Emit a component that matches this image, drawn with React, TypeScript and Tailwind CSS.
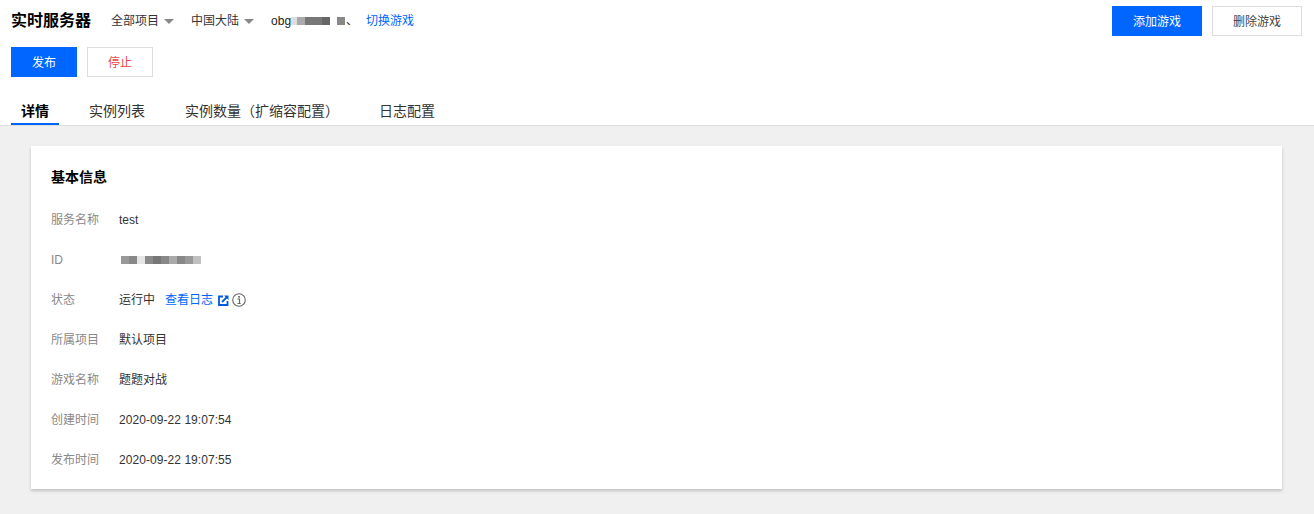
import React from 'react';

const font = { fontFamily: '"Liberation Sans", "Noto Sans CJK SC", sans-serif' };

const pixelsId = ['#999', '#888', '#e6e6e6', '#8a8a8a', '#777', '#888', '#aaa', '#888', '#999', '#c0c0c0'];

function Caret() {
  return <span className="w-0 h-0 border-x-[5px] border-x-transparent border-t-[5px] border-t-[#888] ml-[5px]" />;
}

function ExternalIcon() {
  return (
    <svg width="11" height="11" viewBox="0 0 11 11" fill="none" className="ml-[5px]">
      <path d="M5 1.500H1v8.500h8.500V6" stroke="#0058e0" strokeWidth="1.800" />
      <path d="M4 7l5-5" stroke="#0058e0" strokeWidth="1.800" />
      <path d="M6 0.500h4.500V5z" fill="#0058e0" />
    </svg>
  );
}

function InfoIcon() {
  return (
    <svg width="14" height="14" viewBox="0 0 14 14" fill="none" className="ml-[3px]">
      <circle cx="7" cy="7" r="6.300" stroke="#666" strokeWidth="1.100" />
      <rect x="6.200" y="3" width="1.700" height="1.700" fill="#666" />
      <path d="M5.500 6h2v4.500M5.500 10.500h3.200" stroke="#666" strokeWidth="1.200" />
    </svg>
  );
}

function Row({ label, children }: { label: string; children: React.ReactNode }) {
  return (
    <div className="flex items-center h-10 text-xs pt-[2px]">
      <span className="w-[68px] text-[#888]">{label}</span>
      <div className="flex items-center text-[#333]">{children}</div>
    </div>
  );
}

export default function App() {
  return (
    <div className="w-[1314px] h-[514px] overflow-hidden bg-[#f0f0f0] flex flex-col" style={font}>
      {/* Header */}
      <div className="bg-white h-[126px] border-b border-[#ddd] flex flex-col shrink-0">
        <div className="flex items-start justify-between pl-[11px] pr-[12px] pt-[6px]">
          <div className="flex items-center h-[30px]">
            <h1 className="text-base font-bold text-black w-[100px]">实时服务器</h1>
            <span className="text-xs text-[#333]">全部项目</span>
            <Caret />
            <span className="text-xs text-[#333] ml-[17px]">中国大陆</span>
            <Caret />
            <span className="text-xs text-[#222] ml-[17px]">obg</span>
            {/* blurred account id */}
            <div className="flex h-[8px] w-[55px]">
              <span className="w-[6px] bg-[#ddd]" />
              <span className="w-[8px] bg-[#aaa]" />
              <span className="w-[17px] bg-[#777]" />
              <span className="w-[8px] bg-[#666]" />
              <span className="w-[7px]" />
              <span className="w-[8px] bg-[#888]" />
            </div>
            <span className="text-xs text-[#333] w-[12px]">、</span>
            <a className="text-xs text-[#0066ff] ml-[8px]">切换游戏</a>
          </div>
          <div className="flex gap-[10px]">
            <button className="w-[90px] h-[30px] pt-[1px] bg-[#0066ff] text-white text-xs">添加游戏</button>
            <button className="w-[90px] h-[30px] pt-[1px] bg-white border border-[#ddd] text-[#444] text-xs">删除游戏</button>
          </div>
        </div>
        <div className="flex gap-[10px] pl-[11px] mt-[11px]">
          <button className="w-[66px] h-[30px] pt-[1px] bg-[#0066ff] text-white text-xs">发布</button>
          <button className="w-[66px] h-[30px] pt-[1px] bg-white border border-[#ddd] text-[#e54545] text-xs">停止</button>
        </div>
        <div className="flex pl-[11px] mt-auto h-[26px] text-sm leading-[24px] text-[#333]">
          <div className="w-[48px] text-center font-bold text-black border-b-2 border-[#0066ff]">详情</div>
          <div className="ml-[30px]">实例列表</div>
          <div className="ml-[40px]">实例数量（扩缩容配置）</div>
          <div className="ml-[40px]">日志配置</div>
        </div>
      </div>

      {/* Body */}
      <div className="pt-[20px] pl-[31px] pr-[32px]">
        <div className="bg-white h-[343px] px-[20px] pt-[20px] shadow-[0_2px_3px_0_rgba(0,0,0,0.2)]">
          <h2 className="text-sm leading-[22px] font-bold text-black mb-[11px]">基本信息</h2>
          <Row label="服务名称">test</Row>
          <Row label="ID">
            <div className="flex h-[8px] ml-[2px]">
              {pixelsId.map((c, i) => (
                <span key={i} className="w-[8px] h-full" style={{ backgroundColor: c }} />
              ))}
            </div>
          </Row>
          <Row label="状态">
            <span>运行中</span>
            <a className="text-[#0066ff] ml-[10px]">查看日志</a>
            <ExternalIcon />
            <InfoIcon />
          </Row>
          <Row label="所属项目">默认项目</Row>
          <Row label="游戏名称">题题对战</Row>
          <Row label="创建时间"><span className="tracking-[0.060px]">2020-09-22 19:07:54</span></Row>
          <Row label="发布时间"><span className="tracking-[0.060px]">2020-09-22 19:07:55</span></Row>
        </div>
      </div>
    </div>
  );
}
